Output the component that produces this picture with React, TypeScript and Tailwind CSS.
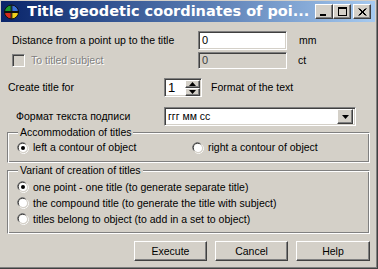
import React from 'react'

const raised = 'border border-t-white border-l-white border-b-[#404040] border-r-[#404040] shadow-[inset_-1px_-1px_0_#808080,inset_1px_1px_0_#d4d0c8] bg-[#d4d0c8]'
const sunken = 'border border-t-[#808080] border-l-[#808080] border-b-white border-r-white shadow-[inset_1px_1px_0_#404040,inset_-1px_-1px_0_#d4d0c8]'
const etched = 'border border-t-[#808080] border-l-[#808080] border-b-white border-r-white shadow-[inset_1px_1px_0_#fff,inset_-1px_-1px_0_#808080]'

function Radio({ checked }: { checked?: boolean }) {
  return (
    <svg width="12" height="12" viewBox="0 0 12 12" className="shrink-0">
      <path d="M1.5 8.5 A5 5 0 0 1 8.5 1.5" stroke="#808080" strokeWidth="1" fill="none" />
      <path d="M2.5 8.5 A4 4 0 0 1 8.5 2.5" stroke="#404040" strokeWidth="1" fill="none" />
      <circle cx="6" cy="6" r="4" fill="#fff" />
      <path d="M10.5 3.5 A5 5 0 0 1 3.5 10.5" stroke="#fff" strokeWidth="1" fill="none" />
      <path d="M9.5 3.5 A4 4 0 0 1 3.5 9.5" stroke="#d4d0c8" strokeWidth="1" fill="none" />
      {checked && <circle cx="6" cy="6" r="2" fill="#000" />}
    </svg>
  )
}

function CaptionButton({ children }: { children: React.ReactNode }) {
  return (
    <div className={`${raised} w-[18px] h-[15px] flex items-center justify-center`}>
      {children}
    </div>
  )
}

function AppIcon() {
  return (
    <svg width="17" height="16" viewBox="0 0 17 16">
      <path d="M8.5 1 A7 7 0 0 0 1.5 8 L8.5 8 Z" fill="#1e9a2e" />
      <path d="M8.5 1 A7 7 0 0 1 15.5 8 L8.5 8 Z" fill="#3a6fd8" />
      <path d="M1.5 8 A7 7 0 0 0 8.5 15 L8.5 8 Z" fill="#d82a1c" />
      <path d="M15.5 8 A7 7 0 0 1 8.5 15 L8.5 8 Z" fill="#f2d21a" />
      <rect x="1" y="7" width="15" height="2" fill="#111" />
      <rect x="7.5" y="1" width="2" height="14" fill="#111" opacity="0.7" />
      <circle cx="8.5" cy="8" r="7" fill="none" stroke="#111" strokeWidth="1" />
    </svg>
  )
}

export default function App() {
  return (
    <div className="w-[378px] h-[269px] overflow-hidden bg-[#d4d0c8] font-['Liberation_Sans',Arial,sans-serif] text-[10.5px] text-black leading-none shadow-[inset_-1px_-1px_0_#404040,inset_-2px_-2px_0_#808080] pt-[1px] pl-[1px] pr-[3px]">
      {/* Title bar */}
      <div className="h-[21px] flex items-center bg-gradient-to-r from-[#0a246a] to-[#a6caf0] pl-[2px] pr-[4px]">
        <AppIcon />
        <div className="ml-[7px] flex-1 text-white font-bold text-[14.5px] font-['DejaVu_Sans',sans-serif] whitespace-nowrap overflow-hidden">
          Title geodetic coordinates of poi...
        </div>
        <div className="flex items-center">
          <CaptionButton>
            <div className="w-[6px] h-[2px] bg-black mt-[6px] -ml-[2px]" />
          </CaptionButton>
          <CaptionButton>
            <div className="w-[9px] h-[9px] border border-black border-t-2" />
          </CaptionButton>
          <div className="ml-[2px]">
            <CaptionButton>
              <svg width="9" height="8" viewBox="0 0 9 8">
                <path d="M0.5 0.5 L7.5 7.5 M1.5 0.5 L8.5 7.5 M7.5 0.5 L0.5 7.5 M8.5 0.5 L1.5 7.5" stroke="#000" strokeWidth="1" />
              </svg>
            </CaptionButton>
          </div>
        </div>
      </div>

      {/* Distance */}
      <div className="mt-[9px] h-[19px] flex items-center">
        <div className="ml-[11px] w-[186px]">Distance from a point up to the title</div>
        <div className={`${sunken} bg-white w-[89px] h-[19px] flex items-center pl-[3px] text-[11px]`}>0</div>
        <div className="ml-[12px]">mm</div>
      </div>

      {/* To titled subject */}
      <div className="mt-[2px] h-[17px] flex items-center">
        <div className="ml-[11px] w-[186px] flex items-center">
          <div className={`${sunken} bg-[#d4d0c8] w-[13px] h-[13px]`} />
          <span className="ml-[6px] text-[#808080] [text-shadow:1px_1px_0_#fff]">To titled subject</span>
        </div>
        <div className={`${sunken} bg-[#d4d0c8] w-[89px] h-[17px] flex items-center pl-[3px] text-[11px] text-[#404040]`}>0</div>
        <div className="ml-[11px]">ct</div>
      </div>

      {/* Create title for */}
      <div className="mt-[9px] h-[19px] flex items-center">
        <div className="ml-[7px] w-[156px]">Create title for</div>
        <div className={`${sunken} bg-white w-[38px] h-[19px] flex items-center`}>
          <span className="flex-1 pl-[3px] text-[13px]">1</span>
          <div className="flex flex-col mr-[1px]">
            <div className={`${raised} w-[15px] h-[8px] flex items-center justify-center`}>
              <svg width="7" height="4" viewBox="0 0 7 4"><path d="M3.5 0 L7 4 L0 4 Z" fill="#000" /></svg>
            </div>
            <div className={`${raised} w-[15px] h-[8px] flex items-center justify-center`}>
              <svg width="7" height="4" viewBox="0 0 7 4"><path d="M0 0 L7 0 L3.5 4 Z" fill="#000" /></svg>
            </div>
          </div>
        </div>
        <div className="ml-[9px]">Format of the text</div>
      </div>

      {/* Format combo */}
      <div className="mt-[10px] h-[19px] flex items-center">
        <div className="ml-[15px] w-[148px]">Формат текста подписи</div>
        <div className={`${sunken} bg-white w-[192px] h-[19px] flex items-center pl-[3px] pr-[2px]`}>
          <span className="flex-1">ггг мм сс</span>
          <div className={`${raised} w-[16px] h-[15px] flex items-center justify-center`}>
            <svg width="7" height="4" viewBox="0 0 7 4"><path d="M0 0 L7 0 L3.5 4 Z" fill="#000" /></svg>
          </div>
        </div>
      </div>

      {/* Accommodation group */}
      <div className={`${etched} relative mt-[6px] ml-[6px] w-[363px] h-[31px] pt-[8px] pl-[9px] flex items-start`}>
        <span className="absolute -top-[6px] left-[10px] bg-[#d4d0c8] px-[2px]">Accommodation of titles</span>
        <div className="w-[175px] h-[13px] flex items-center">
          <Radio checked />
          <span className="ml-[4px]">left a contour of object</span>
        </div>
        <div className="h-[13px] flex items-center">
          <Radio />
          <span className="ml-[4px]">right a contour of object</span>
        </div>
      </div>

      {/* Variant group */}
      <div className={`${etched} relative mt-[7px] ml-[6px] w-[363px] h-[64px] pt-[8px] pl-[9px] flex flex-col`}>
        <span className="absolute -top-[6px] left-[10px] bg-[#d4d0c8] px-[2px]">Variant of creation of titles</span>
        <div className="h-[16px] flex items-center">
          <Radio checked />
          <span className="ml-[4px]">one point - one title (to generate separate title)</span>
        </div>
        <div className="h-[16px] flex items-center">
          <Radio />
          <span className="ml-[4px]">the compound title (to generate the title with subject)</span>
        </div>
        <div className="h-[16px] flex items-center">
          <Radio />
          <span className="ml-[4px]">titles belong to object (to add in a set to object)</span>
        </div>
      </div>

      {/* Buttons */}
      <div className="mt-[7px] ml-[133px] flex gap-[8px]">
        <div className={`${raised} w-[73px] h-[20px] flex items-center justify-center`}>Execute</div>
        <div className={`${raised} w-[73px] h-[20px] flex items-center justify-center`}>Cancel</div>
        <div className={`${raised} w-[74px] h-[20px] flex items-center justify-center`}>Help</div>
      </div>
    </div>
  )
}
